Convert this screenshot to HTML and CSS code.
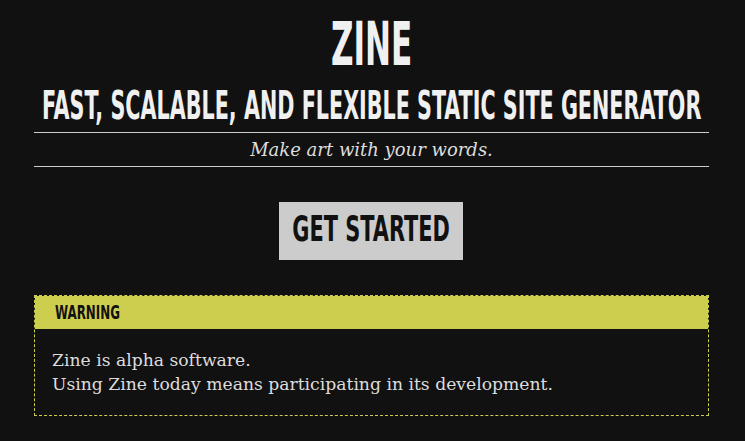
FILE: index.html
```html
<!DOCTYPE html>
<html lang="en">
<head>
<meta charset="utf-8">
<title>Zine</title>
<link rel="stylesheet" href="styles.css">
</head>
<body>
<main class="page">
  <header class="hero">
    <h1 class="title"><span class="squeeze">Zine</span></h1>
    <h2 class="subtitle"><span class="squeeze">Fast, Scalable, and Flexible Static Site Generator</span></h2>
    <p class="tagline">Make art with your words.</p>
  </header>
  <div class="cta-wrap">
    <a class="cta" href="#"><span class="squeeze">Get Started</span></a>
  </div>
  <section class="warning">
    <div class="warning-head"><span class="squeeze">Warning</span></div>
    <div class="warning-body">
      <p>Zine is alpha software.<br>Using Zine today means participating in its development.</p>
    </div>
  </section>
</main>
</body>
</html>
```

FILE: styles.css
```css
html, body {
  margin: 0;
  padding: 0;
  background: #111111;
  color: #eeeeee;
}

body {
  font-family: "DejaVu Serif", serif;
  padding-right: 2px;
}

.page {
  width: 675px;
  margin: 0 auto;
  padding-top: 14px;
}

.hero {
  text-align: center;
}

.title, .subtitle, .cta, .warning-head {
  font-family: "DejaVu Sans Condensed", "DejaVu Sans", sans-serif;
  font-weight: bold;
  text-transform: uppercase;
  white-space: nowrap;
}

.squeeze {
  display: inline-block;
  flex: none;
  transform: scaleX(0.62);
}

.title {
  display: flex;
  justify-content: center;
  margin: 0;
  font-size: 60px;
  line-height: 60px;
  color: #f0f0f0;
}

.title .squeeze {
  transform: scaleX(0.575);
}

.subtitle {
  display: flex;
  justify-content: center;
  margin: 12px 0 0;
  font-size: 39px;
  line-height: 40px;
  color: #f0f0f0;
}

.subtitle .squeeze {
  transform: scaleX(0.59);
}

.tagline {
  margin: 6px 0 0;
  border-top: 1px solid #cccccc;
  border-bottom: 1px solid #cccccc;
  padding: 5px 0 4px;
  font-style: italic;
  font-size: 18px;
  line-height: 24px;
  color: #dddddd;
}

.cta-wrap {
  display: flex;
  justify-content: center;
  margin-top: 35px;
}

.cta {
  display: flex;
  justify-content: center;
  align-items: center;
  box-sizing: border-box;
  width: 184px;
  height: 58px;
  padding-bottom: 5px;
  margin-left: -1px;
  background: #cccccc;
  color: #111111;
  font-size: 36px;
  text-decoration: none;
}

.cta .squeeze {
  transform: scaleX(0.645);
}

.warning {
  margin-top: 35px;
  border: 1px dashed #cdcd4e;
}

.warning-head {
  background: #cdcd4e;
  color: #111111;
  height: 33px;
  line-height: 33px;
  padding-left: 20px;
  font-size: 20px;
  text-align: left;
}

.warning-head .squeeze {
  transform-origin: left center;
  transform: scaleX(0.66);
}

.warning-body {
  padding: 19px 17px 19px;
}

.warning-body p {
  margin: 0;
  font-size: 17.2px;
  line-height: 24px;
  color: #dddddd;
}
```
